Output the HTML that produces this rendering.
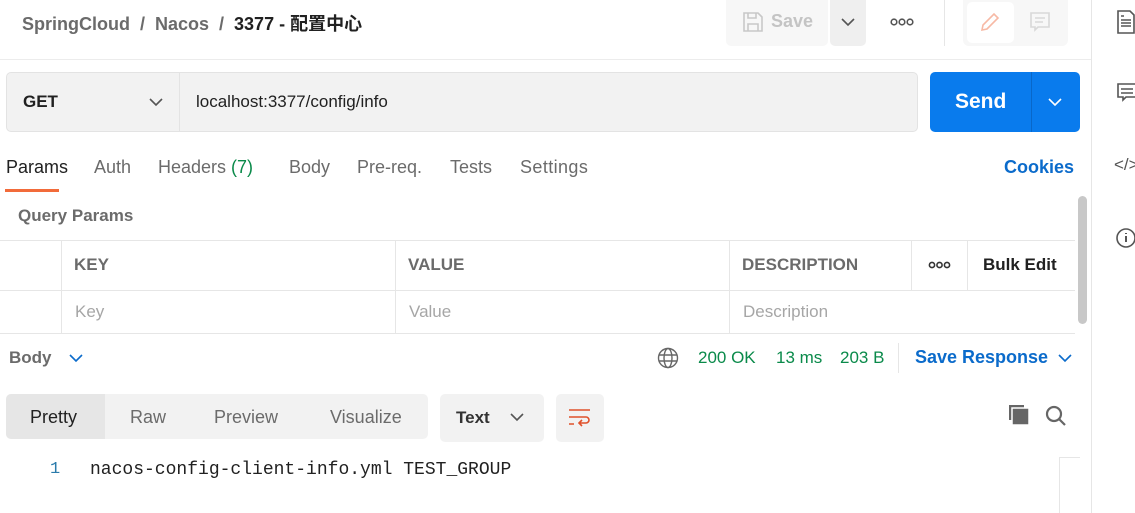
<!DOCTYPE html>
<html><head><meta charset="utf-8"><style>
*{margin:0;padding:0;box-sizing:border-box}
body{width:1135px;height:513px;overflow:hidden;background:#fff;font-family:"Liberation Sans","Noto Sans CJK SC",sans-serif;position:relative;color:#212121}
.a{position:absolute;white-space:nowrap}
</style></head><body>
<!-- breadcrumb -->
<div class="a" style="left:22px;top:10px;font-size:18px;color:#6b6b6b;font-weight:bold">SpringCloud&nbsp;&nbsp;/&nbsp;&nbsp;Nacos&nbsp;&nbsp;/&nbsp;&nbsp;<span style="color:#212121">3377 - 配置中心</span></div>
<!-- save -->
<div class="a" style="left:726px;top:0;width:102px;height:46px;background:#f7f7f7;border-radius:0 0 5px 5px"></div>
<svg class="a" style="left:742px;top:11px" width="22" height="22" viewBox="0 0 22 22" fill="none" stroke="#c8c8c8" stroke-width="1.6"><path d="M2 2h14l4 4v14H2z M6 2v5h8V2 M6 20v-7h10v7"/></svg>
<div class="a" style="left:771px;top:11px;font-size:18px;color:#c4c4c4;font-weight:bold">Save</div>
<div class="a" style="left:830px;top:0;width:36px;height:46px;background:#efefef;border-radius:0 0 5px 5px"></div>
<svg class="a" style="left:841px;top:17px" width="14" height="10"><path d="M1 2l6 6 6-6" fill="none" stroke="#555" stroke-width="1.6"/></svg>
<svg class="a" style="left:890px;top:17px" width="24" height="10" fill="none" stroke="#555" stroke-width="1.6"><circle cx="4" cy="5" r="2.8"/><circle cx="12" cy="5" r="2.8"/><circle cx="20" cy="5" r="2.8"/></svg>
<div class="a" style="left:944px;top:0;width:1px;height:46px;background:#e6e6e6"></div>
<div class="a" style="left:963px;top:0;width:105px;height:46px;background:#f7f7f7;border-radius:0 0 6px 6px"></div>
<div class="a" style="left:967px;top:2px;width:47px;height:41px;background:#fff;border-radius:5px"></div>
<svg class="a" style="left:978px;top:10px" width="24" height="24"><path d="M4 20l1-5L16 4l4 4L9 19z" fill="none" stroke="#f7b9a5" stroke-width="1.6"/></svg>
<svg class="a" style="left:1029px;top:11px" width="22" height="22"><path d="M2 2h18v14H9l-3 3v-3H2z M6 7h10 M6 11h8" fill="none" stroke="#d8d8d8" stroke-width="1.6"/></svg>
<div class="a" style="left:0;top:59px;width:1091px;height:1px;background:#ececec"></div>
<!-- right sidebar -->
<div class="a" style="left:1091px;top:0;width:1px;height:513px;background:#e6e6e6"></div>
<svg class="a" style="left:1116px;top:9px" width="19" height="26"><path d="M2 2h12l4 4v18H2z M5 7h3 M5 11h10 M5 14h10 M5 17h10" fill="none" stroke="#555" stroke-width="1.6"/></svg>
<svg class="a" style="left:1116px;top:82px" width="19" height="22"><path d="M2 2h18v13H10l-3 3v-3H2z M5 7h12 M5 11h12" fill="none" stroke="#555" stroke-width="1.6"/></svg>
<div class="a" style="left:1114px;top:155px;font-size:17px;color:#555">&lt;/&gt;</div>
<svg class="a" style="left:1114px;top:226px" width="21" height="24"><circle cx="12" cy="12" r="9" fill="none" stroke="#555" stroke-width="1.6"/><path d="M12 10v6 M12 7v1" stroke="#555" stroke-width="2"/></svg>
<!-- url bar -->
<div class="a" style="left:6px;top:72px;width:912px;height:60px;background:#f2f2f2;border:1px solid #e3e3e3;border-radius:5px"></div>
<div class="a" style="left:179px;top:73px;width:1px;height:58px;background:#e3e3e3"></div>
<div class="a" style="left:23px;top:92px;font-size:17px;font-weight:bold;color:#212121">GET</div>
<svg class="a" style="left:149px;top:97px" width="14" height="10"><path d="M1 2l6 6 6-6" fill="none" stroke="#555" stroke-width="1.6"/></svg>
<div class="a" style="left:196px;top:92px;font-size:17px;color:#212121">localhost:3377/config/info</div>
<div class="a" style="left:930px;top:72px;width:150px;height:60px;background:#097bed;border-radius:5px"></div>
<div class="a" style="left:1031px;top:72px;width:1px;height:60px;background:#0867c9"></div>
<div class="a" style="left:955px;top:90px;font-size:21px;font-weight:bold;color:#fff">Send</div>
<svg class="a" style="left:1048px;top:97px" width="14" height="10"><path d="M1 2l6 6 6-6" fill="none" stroke="#fff" stroke-width="1.6"/></svg>
<!-- tabs -->
<div class="a" style="top:157px;left:6px;font-size:18px;color:#212121">Params</div>
<div class="a" style="top:157px;left:94px;font-size:18px;color:#6b6b6b">Auth</div>
<div class="a" style="top:157px;left:158px;font-size:18px;color:#6b6b6b">Headers <span style="color:#0a8a4a">(7)</span></div>
<div class="a" style="top:157px;left:289px;font-size:18px;color:#6b6b6b">Body</div>
<div class="a" style="top:157px;left:357px;font-size:18px;color:#6b6b6b">Pre-req.</div>
<div class="a" style="top:157px;left:450px;font-size:18px;color:#6b6b6b">Tests</div>
<div class="a" style="top:157px;left:520px;font-size:18px;color:#6b6b6b;letter-spacing:0.4px">Settings</div>
<div class="a" style="top:157px;left:1004px;font-size:18px;color:#0b6bcb;font-weight:bold">Cookies</div>
<div class="a" style="left:5px;top:189px;width:54px;height:3px;background:#f26b3a"></div>
<div class="a" style="left:18px;top:206px;font-size:17px;font-weight:bold;color:#6b6b6b">Query Params</div>
<div class="a" style="left:1078px;top:196px;width:9px;height:128px;background:#c8c8c8;border-radius:5px"></div>
<!-- table -->
<div class="a" style="left:0;top:240px;width:1075px;height:1px;background:#e6e6e6"></div>
<div class="a" style="left:0;top:290px;width:1075px;height:1px;background:#e6e6e6"></div>
<div class="a" style="left:0;top:333px;width:1075px;height:1px;background:#e6e6e6"></div>
<div class="a" style="left:61px;top:240px;width:1px;height:93px;background:#e6e6e6"></div>
<div class="a" style="left:395px;top:240px;width:1px;height:93px;background:#e6e6e6"></div>
<div class="a" style="left:729px;top:240px;width:1px;height:93px;background:#e6e6e6"></div>
<div class="a" style="left:911px;top:240px;width:1px;height:50px;background:#e6e6e6"></div>
<div class="a" style="left:967px;top:240px;width:1px;height:50px;background:#e6e6e6"></div>
<div class="a" style="left:74px;top:255px;font-size:17px;font-weight:bold;color:#6b6b6b">KEY</div>
<div class="a" style="left:408px;top:255px;font-size:17px;font-weight:bold;color:#6b6b6b">VALUE</div>
<div class="a" style="left:742px;top:255px;font-size:17px;font-weight:bold;color:#6b6b6b">DESCRIPTION</div>
<svg class="a" style="left:928px;top:260px" width="24" height="10" fill="none" stroke="#333" stroke-width="1.6"><circle cx="4" cy="5" r="2.6"/><circle cx="11.5" cy="5" r="2.6"/><circle cx="19" cy="5" r="2.6"/></svg>
<div class="a" style="left:983px;top:255px;font-size:17px;font-weight:bold;color:#212121">Bulk Edit</div>
<div class="a" style="left:75px;top:302px;font-size:17px;color:#a6a6a6">Key</div>
<div class="a" style="left:409px;top:302px;font-size:17px;color:#a6a6a6">Value</div>
<div class="a" style="left:743px;top:302px;font-size:17px;color:#a6a6a6">Description</div>
<!-- response bar -->
<div class="a" style="left:9px;top:348px;font-size:17px;font-weight:bold;color:#6b6b6b">Body</div>
<svg class="a" style="left:69px;top:353px" width="14" height="10"><path d="M1 2l6 6 6-6" fill="none" stroke="#0b6bcb" stroke-width="1.6"/></svg>
<svg class="a" style="left:657px;top:347px" width="22" height="22" fill="none" stroke="#666" stroke-width="1.4"><circle cx="11" cy="11" r="9.5"/><ellipse cx="11" cy="11" rx="4" ry="9.5"/><path d="M1.5 8h19 M1.5 14h19"/></svg>
<div class="a" style="left:698px;top:348px;font-size:17px;color:#0a8a4a">200 OK</div>
<div class="a" style="left:776px;top:348px;font-size:17px;color:#0a8a4a">13 ms</div>
<div class="a" style="left:840px;top:348px;font-size:17px;color:#0a8a4a">203 B</div>
<div class="a" style="left:898px;top:343px;width:1px;height:30px;background:#e6e6e6"></div>
<div class="a" style="left:915px;top:347px;font-size:18px;font-weight:bold;color:#0b6bcb">Save Response</div>
<svg class="a" style="left:1058px;top:353px" width="14" height="10"><path d="M1 2l6 6 6-6" fill="none" stroke="#0b6bcb" stroke-width="1.6"/></svg>
<!-- format tabs -->
<div class="a" style="left:6px;top:394px;width:422px;height:45px;background:#f2f2f2;border-radius:5px"></div>
<div class="a" style="left:6px;top:394px;width:99px;height:45px;background:#e6e6e6;border-radius:5px 0 0 5px"></div>
<div class="a" style="left:30px;top:407px;font-size:18px;color:#212121">Pretty</div>
<div class="a" style="left:130px;top:407px;font-size:18px;color:#6b6b6b">Raw</div>
<div class="a" style="left:214px;top:407px;font-size:18px;color:#6b6b6b">Preview</div>
<div class="a" style="left:330px;top:407px;font-size:18px;color:#6b6b6b">Visualize</div>
<div class="a" style="left:440px;top:394px;width:104px;height:48px;background:#f2f2f2;border-radius:5px"></div>
<div class="a" style="left:456px;top:408px;font-size:17px;font-weight:bold;color:#333">Text</div>
<svg class="a" style="left:510px;top:412px" width="14" height="10"><path d="M1 2l6 6 6-6" fill="none" stroke="#555" stroke-width="1.6"/></svg>
<div class="a" style="left:556px;top:394px;width:48px;height:48px;background:#f2f2f2;border-radius:5px"></div>
<svg class="a" style="left:568px;top:408px" width="24" height="20" fill="none" stroke="#e0512b" stroke-width="1.6"><path d="M1 2h21 M1 9h17a3 3 0 0 1 0 6h-6 M14 12l-3 3 3 3 M1 16h5"/></svg>
<svg class="a" style="left:1008px;top:404px" width="24" height="24"><rect x="1" y="1" width="15" height="15" fill="#666"/><rect x="4" y="4" width="17" height="17" fill="#666" stroke="#fff" stroke-width="1.5"/></svg>
<svg class="a" style="left:1044px;top:404px" width="24" height="24" fill="none" stroke="#666" stroke-width="2.2"><circle cx="10" cy="10" r="7"/><path d="M15 15l6 6"/></svg>
<!-- code -->
<div class="a" style="left:50px;top:460px;font-family:'Liberation Mono',monospace;font-size:17px;color:#2b7bab">1</div>
<div class="a" style="left:90px;top:460px;font-family:'Liberation Mono',monospace;font-size:18px;color:#212121">nacos-config-client-info.yml TEST_GROUP</div>
<div class="a" style="left:1059px;top:457px;width:1px;height:56px;background:#e6e6e6"></div>
<div class="a" style="left:1059px;top:457px;width:21px;height:1px;background:#e6e6e6"></div>
</body></html>
